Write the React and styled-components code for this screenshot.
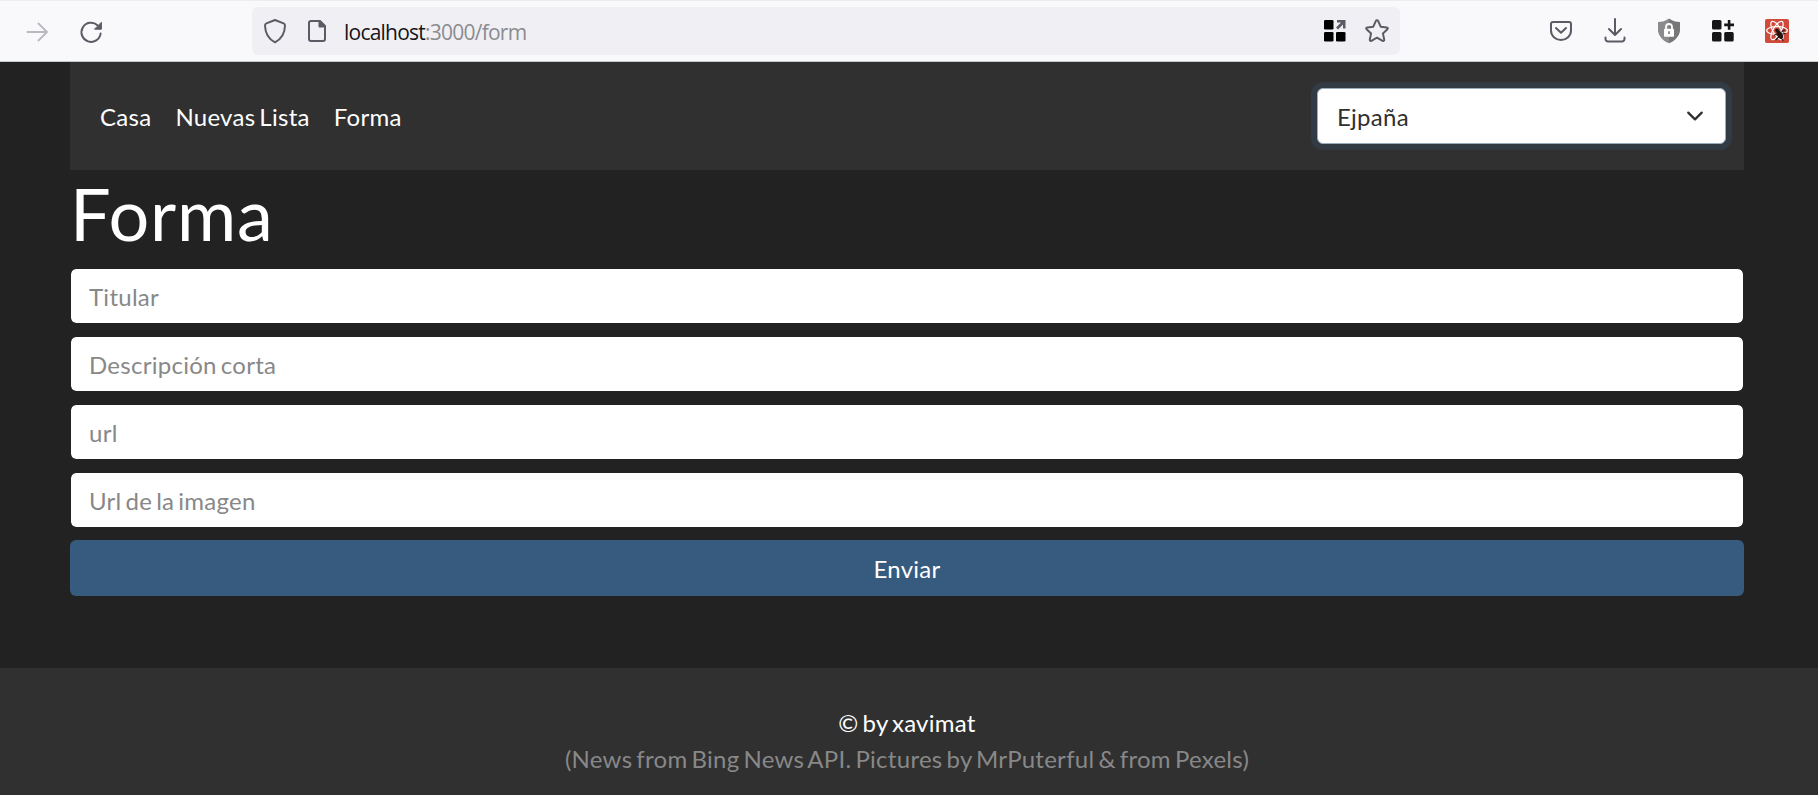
import React from "react";
import styled, { createGlobalStyle } from "styled-components";

const GlobalStyle = createGlobalStyle`
  * { box-sizing: border-box; }
  html, body { margin: 0; padding: 0; }
  body {
    background: #222;
    color: #fff;
    font-family: Lato, "Liberation Sans", sans-serif;
    font-size: 24px;
    line-height: 36px;
    letter-spacing: 0.27px;
    word-spacing: -2.4px;
    overflow: hidden;
  }
`;

const Page = styled.div`
  display: flex;
  flex-direction: column;
  height: 795px;
  overflow: hidden;
`;

const BrowserBar = styled.header`
  display: flex;
  align-items: flex-start;
  flex: none;
  height: 62px;
  padding: 6px 28px 0 24px;
  background: #f9f9fb;
  border-top: 1px solid #ededf0;
  border-bottom: 1px solid #c3cbc8;
`;

const IconSlot = styled.span`
  display: flex;
  flex: none;
  width: 26px;
  height: 48px;
  align-items: center;
  justify-content: center;
  margin-left: ${(p) => p.$gap || 0}px;
  color: ${(p) => p.$color || "#5b5b66"};

  svg { display: block; }
`;

const AddressBar = styled.div`
  display: flex;
  align-items: center;
  width: 1148px;
  height: 48px;
  margin-left: 148px;
  padding: 0 10px;
  border-radius: 6px;
  background: #f0f0f4;
`;

const Address = styled.span`
  flex: 1;
  margin-left: 14px;
  padding-top: 2px;
  font: 21px/46px "Open Sans", "Noto Sans", sans-serif;
  letter-spacing: -0.77px;
  color: #8b8b90;
  white-space: nowrap;
`;

const Host = styled.span`
  color: #15141a;
`;

const Extensions = styled.div`
  display: flex;
  margin-left: auto;
`;

const Container = styled.div`
  width: 1674px;
  margin-left: 70px;
  flex: none;
`;

const Navbar = styled.nav`
  display: flex;
  align-items: center;
  justify-content: space-between;
  height: 108px;
  padding: 0 18px;
  background: #303030;
  border-radius: 0 0 1px 1px;
`;

const NavLinks = styled.div`
  display: flex;
  padding-top: 2px;
`;

const NavLink = styled.a`
  padding: 0 12px;
  color: #fff;
`;

const Select = styled.div`
  display: flex;
  align-items: center;
  justify-content: space-between;
  width: 409px;
  height: 56px;
  padding: 0 18px 0 19px;
  border: 1px solid #9badbf;
  border-radius: 6px;
  background: #fff;
  color: #303030;
  box-shadow: 0 0 0 6px rgba(55, 90, 127, 0.25);
`;

const SelectValue = styled.span`
  padding-top: 2px;
`;

const Title = styled.h1`
  margin: 0 0 12px;
  font-size: 72px;
  font-weight: 400;
  line-height: 86px;
  letter-spacing: 0.8px;
`;

const Form = styled.form`
  display: flex;
  flex-direction: column;
  gap: 12px;
`;

const Field = styled.input`
  display: block;
  width: 100%;
  height: 56px;
  padding: 0 18px;
  border: 1px solid #222;
  border-radius: 6px;
  background: #fff;
  background-clip: padding-box;
  font: inherit;
  letter-spacing: inherit;
  word-spacing: inherit;
  outline: none;

  &::placeholder {
    color: #888;
    opacity: 1;
  }
`;

const Submit = styled.button`
  height: 56px;
  padding: 2px 0 0;
  border: 0;
  border-radius: 6px;
  background: #375a7f;
  color: #fff;
  font: inherit;
  letter-spacing: inherit;
`;

const Footer = styled.footer`
  flex: 1;
  margin-top: 72px;
  padding: 37px 4px 0 0;
  background: #303030;
  text-align: center;
`;

const FooterLine = styled.div`
  color: ${(p) => (p.$muted ? "#888" : "#fff")};
`;

const stroke = {
  fill: "none",
  stroke: "currentColor",
  strokeWidth: 2,
  strokeLinecap: "round",
  strokeLinejoin: "round",
};

const ForwardIcon = () => (
  <svg width="26" height="26" viewBox="0 0 26 26" {...stroke} strokeWidth="1.8">
    <path d="M3.5 14H23M14.5 5.5L23 14l-8.5 8.5" />
  </svg>
);

const ReloadIcon = () => (
  <svg width="26" height="26" viewBox="0 0 26 26" {...stroke}>
    <path d="M22.6 15.5A9.6 9.6 0 1 1 19.5 7.2" />
    <path d="M23.4 4.6v6.6h-6.6z" fill="currentColor" strokeWidth="1" />
  </svg>
);

const ShieldIcon = () => (
  <svg width="26" height="26" viewBox="0 0 26 26" {...stroke}>
    <path d="M13 2l8.6 3.4Q23 6 23 7.500C22.800 15.500 19.500 21 13 24.300 6.500 21 3.200 15.500 3 7.500Q3 6 4.400 5.400z" />
  </svg>
);

const PageIcon = () => (
  <svg width="26" height="26" viewBox="0 0 26 26" {...stroke}>
    <path d="M16 3H7a2 2 0 0 0-2 2v16a2 2 0 0 0 2 2h12a2 2 0 0 0 2-2V8z" />
    <path d="M15.500 3.500v5h5z" fill="currentColor" />
  </svg>
);

const GridArrowIcon = () => (
  <svg width="26" height="26" viewBox="0 0 26 26" fill="#000">
    <rect x="2" y="2" width="9.500" height="9.500" rx="1.300" />
    <rect x="2" y="14" width="9.500" height="9.500" rx="1.300" />
    <rect x="14" y="14" width="9.500" height="9.500" rx="1.300" />
    <path d="M15 2h8.500v8.500h-2.500V6.500l-5 5-2-2 5-5h-4z" fill="#5b5b66" />
  </svg>
);

const StarIcon = () => (
  <svg width="26" height="26" viewBox="0 0 26 26" {...stroke}>
    <path d="M13 2.300q.8 0 1.200.9l2.500 5.500 6 .7q1.900.4.700 1.800l-4.500 4.200 1.300 6.100q.1 2-1.600 1.300L13 19.700l-5.600 3.100q-1.700.7-1.600-1.300l1.300-6.100-4.500-4.200q-1.200-1.400.7-1.800l6-.7 2.500-5.500q.4-.9 1.200-.9z" />
  </svg>
);

const PocketIcon = () => (
  <svg width="26" height="26" viewBox="0 0 26 26" {...stroke}>
    <path d="M5 4h16a2 2 0 0 1 2 2v6.500a10 9.500 0 0 1-20 0V6a2 2 0 0 1 2-2z" />
    <path d="M8 10l5 4.800 5-4.800" />
  </svg>
);

const DownloadIcon = () => (
  <svg width="26" height="26" viewBox="0 0 26 26" {...stroke}>
    <path d="M13 1v15.500M7 11l6 6 6-6M3.500 19.500V21a2.500 2.500 0 0 0 2.500 2.500h14a2.500 2.500 0 0 0 2.500-2.500v-1.500" />
  </svg>
);

const LockShieldIcon = () => (
  <svg width="26" height="26" viewBox="0 0 26 26">
    <path d="M13 .500q5 3.500 11 3.500v9C23 19 18 23.500 13 25.200z" fill="#777" />
    <path d="M13 .500Q8 4 2 4v9c1 6 6 10.500 11 12.200z" fill="#8b8b8b" />
    <path d="M10 11V9a3 3 0 0 1 6 0v2" fill="none" stroke="#fff" strokeWidth="1.800" />
    <rect x="8" y="10.800" width="10" height="8" rx=".7" fill="#fff" />
    <path d="M13 13.300v2.800" stroke="#777" strokeWidth="1.600" />
  </svg>
);

const GridPlusIcon = () => (
  <svg width="26" height="26" viewBox="0 0 26 26" fill="#151517">
    <rect x="2" y="2" width="9.500" height="9.500" rx="1.500" />
    <rect x="2" y="14" width="9.500" height="9.500" rx="1.500" />
    <rect x="14.200" y="14" width="9.500" height="9.500" rx="1.500" />
    <path d="M17.800 2h2.600v3.500H24v2.700h-3.600v3.600h-2.600V8.200h-3.600V5.500h3.600z" />
  </svg>
);

const ReactBugIcon = () => (
  <svg width="26" height="26" viewBox="0 0 26 26">
    <rect x="1" y="1" width="24" height="24" rx="1.800" fill="#d04a3c" />
    <g fill="none" stroke="#fff" strokeWidth="1.200">
      <ellipse cx="13" cy="12.500" rx="10.300" ry="3.900" />
      <ellipse cx="13" cy="12.500" rx="10.300" ry="3.900" transform="rotate(60 13 12.500)" />
      <ellipse cx="13" cy="12.500" rx="10.300" ry="3.900" transform="rotate(120 13 12.500)" />
    </g>
    <g stroke="#221512" strokeWidth="1.200" strokeLinecap="round">
      <ellipse cx="15.800" cy="16.800" rx="2" ry="3.800" fill="#221512" transform="rotate(-30 15.800 16.800)" />
      <circle cx="13" cy="12.200" r="1.200" fill="#221512" />
      <path d="M10.500 17l3-1M12 21.500l2.500-2.500M18 13.500l2.500-1.500M18.500 16l3-.5M17.500 20.500l1.500 2" />
    </g>
  </svg>
);

const ChevronIcon = () => (
  <svg width="24" height="18" viewBox="0 0 16 16" {...stroke} stroke="#303030">
    <path d="M2 5l6 6 6-6" />
  </svg>
);

const links = ["Casa", "Nuevas Lista", "Forma"];
const fields = ["Titular", "Descripción corta", "url", "Url de la imagen"];

export default function App() {
  return (
    <>
      <GlobalStyle />
      <Page>
        <BrowserBar>
          <IconSlot $color="#b9b9be"><ForwardIcon /></IconSlot>
          <IconSlot $gap={28}><ReloadIcon /></IconSlot>
          <AddressBar>
            <IconSlot><ShieldIcon /></IconSlot>
            <IconSlot $gap={16}><PageIcon /></IconSlot>
            <Address><Host>localhost</Host>:3000/form</Address>
            <IconSlot><GridArrowIcon /></IconSlot>
            <IconSlot $gap={16}><StarIcon /></IconSlot>
          </AddressBar>
          <Extensions>
            <IconSlot><PocketIcon /></IconSlot>
            <IconSlot $gap={28}><DownloadIcon /></IconSlot>
            <IconSlot $gap={28}><LockShieldIcon /></IconSlot>
            <IconSlot $gap={28}><GridPlusIcon /></IconSlot>
            <IconSlot $gap={28}><ReactBugIcon /></IconSlot>
          </Extensions>
        </BrowserBar>
        <Container>
          <Navbar>
            <NavLinks>
              {links.map((label) => <NavLink key={label}>{label}</NavLink>)}
            </NavLinks>
            <Select><SelectValue>Ejpaña</SelectValue><ChevronIcon /></Select>
          </Navbar>
          <Title>Forma</Title>
          <Form>
            {fields.map((label) => <Field key={label} placeholder={label} />)}
            <Submit type="button">Enviar</Submit>
          </Form>
        </Container>
        <Footer>
          <FooterLine>© by xavimat</FooterLine>
          <FooterLine $muted>(News from Bing News API. Pictures by MrPuterful &amp; from Pexels)</FooterLine>
        </Footer>
      </Page>
    </>
  );
}
